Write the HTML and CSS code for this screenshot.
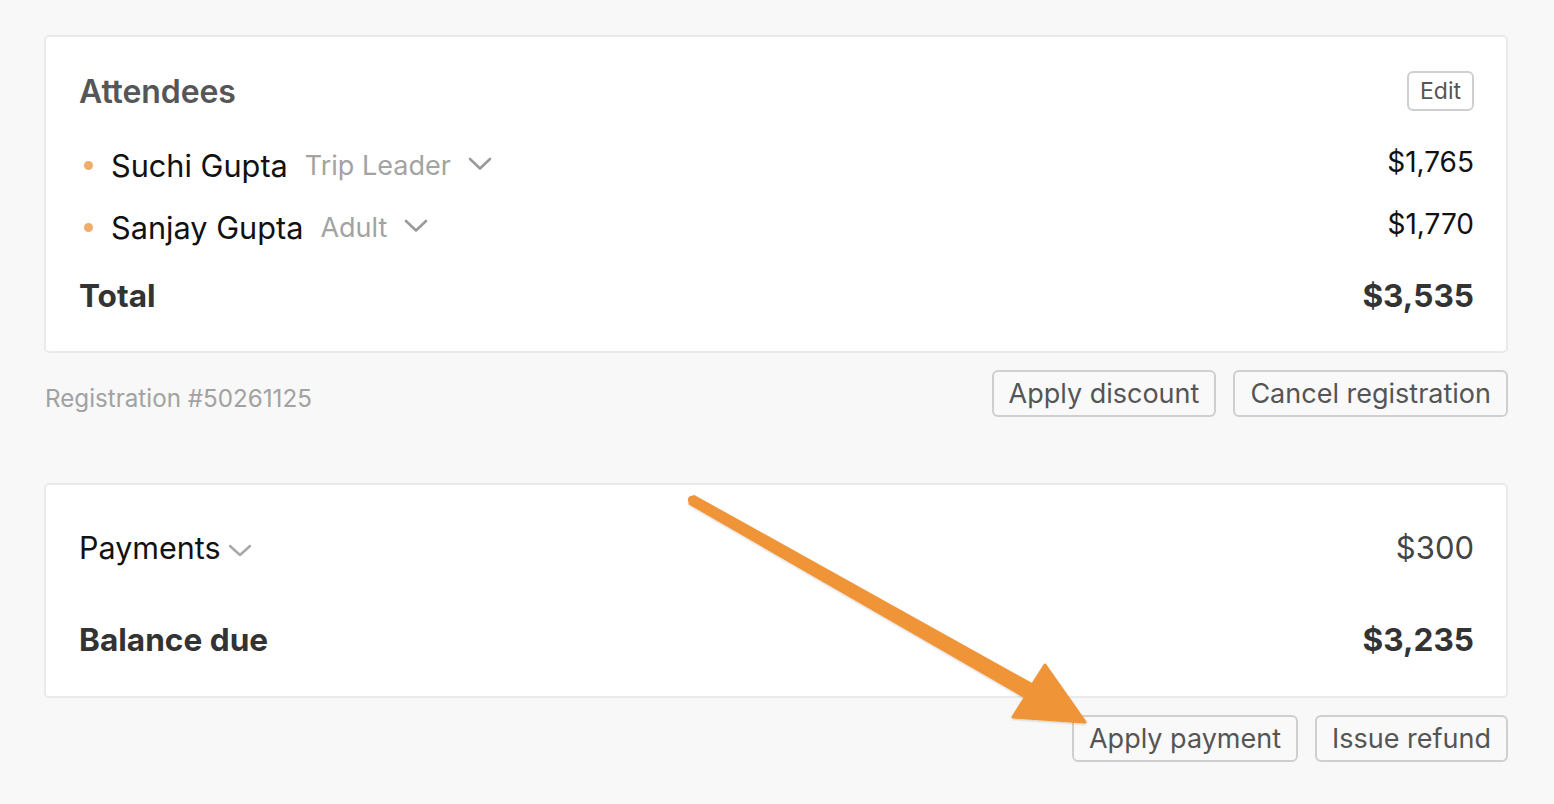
FILE: index.html
```html
<!DOCTYPE html>
<html lang="en">
<head>
<meta charset="utf-8">
<title>Registration</title>
<link rel="stylesheet" href="styles.css">
</head>
<body>
<main class="page">
  <section class="card attendees">
    <div class="card-head">
      <h2 class="card-title">Attendees</h2>
      <button class="btn btn-small">Edit</button>
    </div>
    <ul class="att-list">
      <li class="att-row">
        <span class="dot"></span>
        <span class="att-name">Suchi Gupta</span>
        <span class="att-type">Trip Leader</span>
        <svg class="chev" width="24" height="14" viewBox="0 0 24 14"><path d="M2 2 L12 11.5 L22 2" fill="none" stroke="#9a9a9a" stroke-width="2.6" stroke-linecap="round" stroke-linejoin="round"/></svg>
        <span class="att-price">$1,765</span>
      </li>
      <li class="att-row">
        <span class="dot"></span>
        <span class="att-name">Sanjay Gupta</span>
        <span class="att-type">Adult</span>
        <svg class="chev" width="24" height="14" viewBox="0 0 24 14"><path d="M2 2 L12 11.5 L22 2" fill="none" stroke="#9a9a9a" stroke-width="2.6" stroke-linecap="round" stroke-linejoin="round"/></svg>
        <span class="att-price">$1,770</span>
      </li>
    </ul>
    <div class="total-row">
      <span>Total</span>
      <span>$3,535</span>
    </div>
  </section>

  <div class="actions actions-reg">
    <span class="reg-id">Registration #50261125</span>
    <div class="btn-group">
      <button class="btn">Apply discount</button>
      <button class="btn">Cancel registration</button>
    </div>
  </div>

  <section class="card payments">
    <div class="pay-row">
      <span class="pay-label">Payments
        <svg class="chev-sm" width="24" height="13" viewBox="0 0 24 13"><path d="M2 2 L12 11 L22 2" fill="none" stroke="#a8a8a8" stroke-width="2.4" stroke-linecap="round" stroke-linejoin="round"/></svg>
      </span>
      <span class="pay-amount">$300</span>
    </div>
    <div class="total-row balance">
      <span>Balance due</span>
      <span>$3,235</span>
    </div>
  </section>

  <div class="actions actions-pay">
    <div class="btn-group">
      <button class="btn">Apply payment</button>
      <button class="btn">Issue refund</button>
    </div>
  </div>
</main>

<svg class="arrow" width="1554" height="804" viewBox="0 0 1554 804" aria-hidden="true">
  <defs>
    <filter id="sh" x="-10%" y="-10%" width="120%" height="120%">
      <feDropShadow dx="0" dy="1" stdDeviation="1.2" flood-color="#000" flood-opacity="0.18"/>
    </filter>
  </defs>
  <polygon filter="url(#sh)" points="694,496.5 1032.4,684.9 1045,665 1085,722 1013,717 1025.6,697.1 690,503.5" fill="#f09438" stroke="#f09438" stroke-width="3" stroke-linejoin="round"/>
  <circle cx="692" cy="500" r="4.2" fill="#f09438"/>
</svg>
</body>
</html>
```

FILE: styles.css
```css
* { box-sizing: border-box; }

html, body {
  margin: 0;
  padding: 0;
}

body {
  background: #f7f8f7;
  font-family: Inter, "Noto Sans", "Liberation Sans", sans-serif;
  color: #111;
  width: 1554px;
  height: 804px;
  overflow: hidden;
  position: relative;
}

.page {
  padding: 35px 46px 0 44px;
  width: 1554px;
}

.card {
  background: #fff;
  border: 2px solid #e9eaea;
  border-radius: 5px;
}

.attendees {
  padding: 34px 32px 25px 33px;
  height: 318px;
}

.card-head {
  display: flex;
  justify-content: space-between;
  align-items: center;
  height: 40px;
}

.card-title {
  margin: 0;
  font-size: 32px;
  font-weight: 600;
  color: #565656;
  letter-spacing: -0.1px;
}

.btn {
  font-family: inherit;
  background: #f9f9f9;
  border: 2px solid #cfcfcf;
  border-radius: 6px;
  color: #555;
  font-size: 27px;
  height: 47px;
  padding: 0 15px;
  cursor: pointer;
}

.attendees .card-head .btn-small {
  font-size: 23px;
  height: 40px;
  padding: 0 11px;
  background: #fff;
}

.att-list {
  list-style: none;
  margin: 23px 0 0 0;
  padding: 0;
}

.att-row {
  display: flex;
  align-items: center;
  height: 62px;
}

.dot {
  width: 9px;
  height: 9px;
  border-radius: 50%;
  background: #f0ad6a;
  margin-left: 5px;
  margin-right: 18px;
}

.att-name {
  font-size: 30.7px;
  color: #111;
  margin-right: 17px;
}

.att-type {
  font-size: 27px;
  color: #a3a3a3;
  margin-right: 17px;
}

.chev {
  margin-top: -2px;
}

.att-price {
  margin-left: auto;
  font-size: 28px;
  color: #111;
  margin-top: -6px;
}

.total-row {
  display: flex;
  justify-content: space-between;
  align-items: center;
  height: 62px;
  margin-top: 6px;
  font-size: 31.6px;
  font-weight: 700;
  color: #333;
}

.actions {
  display: flex;
  align-items: center;
  justify-content: flex-end;
  margin-top: 17px;
}

.actions-reg {
  justify-content: space-between;
}

.reg-id {
  font-size: 24.2px;
  color: #a2a2a2;
  margin-left: 1px;
  margin-top: 10px;
}

.btn-group {
  display: flex;
  gap: 17px;
}

.payments {
  margin-top: 66px;
  padding: 31px 32px 26px 33px;
  height: 215px;
}

.pay-row {
  display: flex;
  justify-content: space-between;
  align-items: center;
  height: 62px;
}

.pay-label {
  font-size: 30.5px;
  color: #111;
  display: flex;
  align-items: center;
}

.chev-sm {
  margin-left: 7px;
  margin-top: 6px;
}

.pay-amount {
  font-size: 31px;
  color: #444;
}

.balance {
  margin-top: 30px;
}

.arrow {
  position: absolute;
  left: 0;
  top: 0;
  pointer-events: none;
}
```
